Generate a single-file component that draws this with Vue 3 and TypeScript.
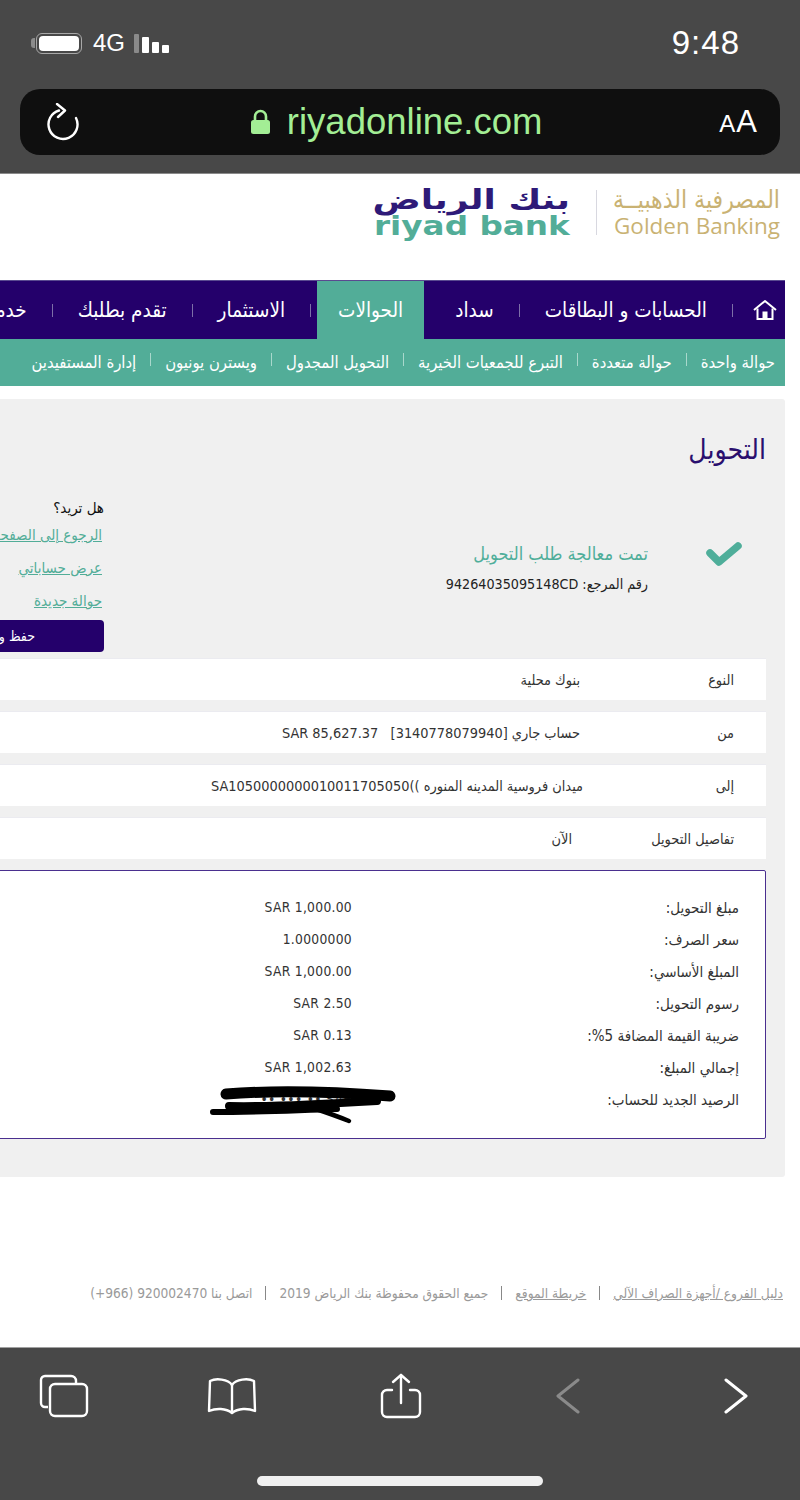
<template>
  <div class="phone">
    <header class="chrome-top">
      <div class="status">
        <div class="status-left">
          <span class="battery-tip"></span>
          <span class="battery"><span class="battery-fill"></span></span>
          <span class="net">4G</span>
          <span class="signal">
            <i v-for="b in signalBars" :key="b.h" :class="{ off: b.off }" :style="{ height: b.h + 'px' }"></i>
          </span>
        </div>
        <span class="clock">9:48</span>
      </div>
      <div class="urlbar">
        <svg class="reload" width="36" height="38" viewBox="0 0 36 38" fill="none" stroke="#fff" stroke-width="2.4" stroke-linecap="round" stroke-linejoin="round">
          <path d="M14 7.5 A14.5 14.5 0 1 0 31 15" />
          <path d="M12 1 L20 7.5 L13 14" />
        </svg>
        <div class="address">
          <svg width="21" height="26" viewBox="0 0 21 26">
            <path d="M5 12 V7.5 a5.5 5.5 0 0 1 11 0 V12" fill="none" stroke="#a3ee95" stroke-width="2.6" />
            <rect x="1" y="11" width="19" height="14" rx="2.5" fill="#a3ee95" />
          </svg>
          <span>riyadonline.com</span>
        </div>
        <div class="reader"><small>A</small><span>A</span></div>
      </div>
    </header>

    <main class="site">
      <div class="brand">
        <div class="golden">
          <span class="golden-ar">المصرفية الذهبيــة</span>
          <span class="golden-en">Golden Banking</span>
        </div>
        <i class="brand-sep"></i>
        <div class="bank">
          <span class="bank-ar">بنك الرياض</span>
          <span class="bank-en">riyad bank</span>
        </div>
      </div>

      <nav class="mainnav">
        <svg class="home" width="26" height="22" viewBox="0 0 26 22" fill="none" stroke="#fff" stroke-width="2">
          <path d="M2 11 L13 2 L24 11" stroke-linejoin="round" />
          <path d="M5.5 9.5 V20 H20.5 V9.5" />
          <rect x="10.5" y="12.5" width="5" height="7.5" fill="#fff" stroke="none" />
        </svg>
        <template v-for="item in mainItems" :key="item.label">
          <i v-if="!item.active" class="nav-sep"></i>
          <a class="nav-item" :class="{ active: item.active }">{{ item.label }}</a>
        </template>
      </nav>

      <nav class="subnav">
        <template v-for="(item, i) in subItems" :key="item">
          <i v-if="i > 0" class="sub-sep"></i>
          <a class="sub-item">{{ item }}</a>
        </template>
      </nav>

      <section class="panel">
        <h1>التحويل</h1>

        <div class="result">
          <div class="check">
            <svg width="36" height="26" viewBox="0 0 36 26">
              <path d="M4 12 L13 21 L32 5" fill="none" stroke="#4fae9a" stroke-width="7.5" stroke-linejoin="round" stroke-linecap="round" />
            </svg>
          </div>
          <div class="result-text">
            <p class="done">تمت معالجة طلب التحويل</p>
            <p class="ref">رقم المرجع: 94264035095148CD</p>
          </div>
          <div class="actions">
            <p class="want">هل تريد؟</p>
            <a v-for="link in actionLinks" :key="link" class="action-link">{{ link }}</a>
            <button class="save">حفظ و طباعة الإيصال كملف</button>
          </div>
        </div>

        <div class="rows">
          <div v-for="row in summaryRows" :key="row.label" class="row">
            <span class="row-label">{{ row.label }}</span>
            <span :style="{ marginRight: row.shift + 'px' }">{{ row.value }}</span>
          </div>
        </div>

        <div class="amounts">
          <div v-for="line in amountLines" :key="line.label" class="amount-line">
            <span class="amount-label">{{ line.label }}</span>
            <span class="amount-value">{{ line.value }}</span>
          </div>
          <svg class="scribble" width="190" height="44" viewBox="0 0 190 44" fill="none" stroke="#000" stroke-linecap="round">
            <path d="M19 9 C70 5 130 7 183 11" stroke-width="11" />
            <path d="M22 21 C70 22 120 19 170 16" stroke-width="8" />
            <path d="M6 27 C50 27 90 25 130 24" stroke-width="6" />
            <path d="M106 23 C118 27 130 31 142 36" stroke-width="4.5" />
          </svg>
        </div>
      </section>

      <footer class="foot">
        <a>دليل الفروع /أجهزة الصراف الآلي</a>
        <i></i>
        <a>خريطة الموقع</a>
        <i></i>
        <span>جميع الحقوق محفوظة بنك الرياض 2019</span>
        <i></i>
        <span>اتصل بنا 920002470 (966+)</span>
      </footer>
    </main>

    <footer class="chrome-bottom">
      <div class="toolbar">
        <svg width="50" height="44" viewBox="0 0 50 44" fill="none" stroke="#fff" stroke-width="2.4">
          <path d="M9 33 H6 a4 4 0 0 1 -4 -4 V6 a4 4 0 0 1 4 -4 H32 a5 5 0 0 1 5 5 V9" />
          <rect x="11" y="10" width="37" height="32" rx="5" />
        </svg>
        <svg class="tool-book" width="50" height="38" viewBox="0 0 50 38" fill="none" stroke="#fff" stroke-width="2.4" stroke-linejoin="round">
          <path d="M25 8 C21 2 9 1 3 4 L2 34 C9 31 19 31 25 36 C31 31 41 31 48 34 L47 4 C41 1 29 2 25 8 Z" />
          <path d="M25 8 V36" />
        </svg>
        <svg class="tool-share" width="42" height="46" viewBox="0 0 42 46" fill="none" stroke="#fff" stroke-width="2.4" stroke-linecap="round" stroke-linejoin="round">
          <path d="M12 17 H7 a5 5 0 0 0 -5 5 V39 a5 5 0 0 0 5 5 H35 a5 5 0 0 0 5 -5 V22 a5 5 0 0 0 -5 -5 H30" />
          <path d="M21 30 V2" />
          <path d="M13 9 L21 2 L29 9" />
        </svg>
        <svg class="tool-back" width="26" height="36" viewBox="0 0 26 36" fill="none" stroke="#8a8a8a" stroke-width="3" stroke-linecap="round" stroke-linejoin="round">
          <path d="M23 2 L3 18 L23 34" />
        </svg>
        <svg class="tool-next" width="26" height="36" viewBox="0 0 26 36" fill="none" stroke="#fff" stroke-width="3" stroke-linecap="round" stroke-linejoin="round">
          <path d="M3 2 L23 18 L3 34" />
        </svg>
      </div>
      <div class="home-indicator"></div>
    </footer>
  </div>
</template>

<script setup lang="ts">
interface SummaryRow {
  label: string
  value: string
  shift: number
}

const signalBars = [
  { h: 19, off: true },
  { h: 16, off: false },
  { h: 11, off: false },
  { h: 8, off: false }
]

const mainItems = [
  { label: 'الحسابات و البطاقات', active: false },
  { label: 'سداد', active: false },
  { label: 'الحوالات', active: true },
  { label: 'الاستثمار', active: false },
  { label: 'تقدم بطلبك', active: false },
  { label: 'خدمات', active: false }
]

const subItems = [
  'حوالة واحدة',
  'حوالة متعددة',
  'التبرع للجمعيات الخيرية',
  'التحويل المجدول',
  'ويسترن يونيون',
  'إدارة المستفيدين'
]

const actionLinks = ['الرجوع إلى الصفحة الرئيسية', 'عرض حساباتي', 'حوالة جديدة']

const summaryRows: SummaryRow[] = [
  { label: 'النوع', value: 'بنوك محلية', shift: 0 },
  { label: 'من', value: 'حساب جاري [3140778079940]\u00a0\u00a0\u00a0SAR 85,627.37', shift: 0 },
  { label: 'إلى', value: 'ميدان فروسية المدينه المنوره ))SA1050000000010011705050', shift: -3 },
  { label: 'تفاصيل التحويل', value: 'الآن', shift: 8 }
]

const amountLines = [
  { label: 'مبلغ التحويل:', value: 'SAR 1,000.00' },
  { label: 'سعر الصرف:', value: '1.0000000' },
  { label: 'المبلغ الأساسي:', value: 'SAR 1,000.00' },
  { label: 'رسوم التحويل:', value: 'SAR 2.50' },
  { label: 'ضريبة القيمة المضافة 5%:', value: 'SAR 0.13' },
  { label: 'إجمالي المبلغ:', value: 'SAR 1,002.63' },
  { label: 'الرصيد الجديد للحساب:', value: 'SAR ••,•••.••' }
]
</script>

<style scoped>
.phone {
  width: 800px;
  height: 1500px;
  display: flex;
  flex-direction: column;
  overflow: hidden;
  font-family: "DejaVu Sans Condensed", "DejaVu Sans", sans-serif;
  background: #fff;
}

.chrome-top {
  height: 174px;
  flex: none;
  box-sizing: border-box;
  padding-top: 28px;
  background: #484848;
  border-bottom: 1px solid #8a8a8a;
  font-family: "Liberation Sans", sans-serif;
}

.status {
  height: 30px;
  display: flex;
  justify-content: space-between;
  align-items: center;
  padding: 0 60px 0 31px;
  color: #fff;
}

.status-left {
  display: flex;
  align-items: center;
}

.battery-tip {
  width: 4px;
  height: 10px;
  background: #8c8c8c;
  border-radius: 3px 0 0 3px;
}

.battery {
  width: 46px;
  height: 21px;
  box-sizing: border-box;
  margin-left: 1px;
  padding: 2px;
  border: 1.5px solid #a8a8a8;
  border-radius: 6px;
}

.battery-fill {
  display: block;
  width: 100%;
  height: 100%;
  background: #fff;
  border-radius: 4px;
}

.net {
  margin-left: 11px;
  font-size: 24px;
}

.signal {
  display: flex;
  align-items: flex-end;
  gap: 3px;
  height: 19px;
  margin-left: 9px;
}

.signal i {
  width: 7px;
  background: #fff;
  border-radius: 1px;
}

.signal i.off {
  width: 5px;
  background: #8a8a8a;
}

.clock {
  font-size: 33px;
  letter-spacing: 1px;
}

.urlbar {
  height: 66px;
  margin: 31px 20px 0;
  padding: 0 23px 0 25px;
  display: flex;
  align-items: center;
  justify-content: space-between;
  background: #0f0f0f;
  border-radius: 20px;
}

.address {
  display: flex;
  align-items: center;
  gap: 16px;
  margin-right: 8px;
  color: #a3ee95;
  font-size: 36.5px;
}

.reader {
  color: #fff;
  font-size: 31px;
  display: flex;
  align-items: baseline;
  gap: 1px;
}

.reader small {
  font-size: 24px;
}

.site {
  flex: 1;
  min-height: 0;
  overflow: hidden;
  direction: rtl;
  background: #fff;
}

.brand {
  height: 106px;
  box-sizing: border-box;
  padding: 12px 20px 0 0;
  display: flex;
  align-items: flex-start;
}

.golden {
  width: 167px;
  display: flex;
  flex-direction: column;
  color: #c9b273;
}

.golden-ar {
  font-size: 24.5px;
  line-height: 28px;
  white-space: nowrap;
}

.golden-en {
  direction: ltr;
  text-align: right;
  font-family: "Open Sans", sans-serif;
  font-size: 22.5px;
  line-height: 24px;
  white-space: nowrap;
}

.brand-sep {
  width: 1px;
  height: 45px;
  margin: 4px 16px 0 26px;
  background: #d8d8e0;
}

.bank {
  width: 196px;
  display: flex;
  flex-direction: column;
}

.bank-ar {
  color: #2e1a78;
  font-family: "DejaVu Sans", sans-serif;
  font-size: 27px;
  font-weight: 700;
  line-height: 27px;
  white-space: nowrap;
  transform: scaleX(1.33);
  transform-origin: right center;
}

.bank-en {
  direction: ltr;
  color: #52ad98;
  font-family: "DejaVu Sans", sans-serif;
  font-size: 27px;
  font-weight: 700;
  line-height: 25px;
  white-space: nowrap;
  transform: scaleX(1.21);
  transform-origin: left center;
}

.mainnav {
  width: 1000px;
  height: 59px;
  padding-right: 7px;
  box-sizing: border-box;
  display: flex;
  align-items: center;
  background: #24006b;
  border-top: 1px solid #5a4a90;
  position: relative;
  left: -15px;
  color: #fff;
  font-size: 20.5px;
  white-space: nowrap;
}

.home {
  flex: none;
  margin-left: 19px;
}

.nav-item {
  padding: 0 25px;
}

.nav-item.active {
  align-self: stretch;
  display: flex;
  align-items: center;
  margin: 0 6px;
  padding: 0 21px;
  background: #52ad98;
}

.nav-sep {
  width: 1px;
  height: 13px;
  background: #7d6fa8;
}

.subnav {
  width: 1000px;
  height: 47px;
  box-sizing: border-box;
  padding-right: 10px;
  display: flex;
  align-items: center;
  position: relative;
  left: -15px;
  background: #52ad98;
  color: #fff;
  font-size: 16.5px;
  white-space: nowrap;
}

.sub-sep {
  width: 1px;
  height: 13px;
  margin: -6px 14px 0;
  background: #a9d8cc;
}

.panel {
  width: 1000px;
  margin-top: 13px;
  position: relative;
  left: -15px;
  box-sizing: border-box;
  height: 778px;
  padding: 35px 19px 0 0;
  background: #f0f0f0;
  border-radius: 3px;
}

h1 {
  margin: 0;
  color: #2a0f6e;
  font-size: 28px;
  font-weight: 400;
  line-height: 32px;
}

.result {
  height: 154px;
  margin-top: 29px;
  display: grid;
  grid-template-columns: 118px 544px 1fr;
}

.check {
  padding: 46px 24px 0 0;
}

.result-text {
  padding-top: 47px;
}

.result-text p {
  margin: 0;
}

.done {
  color: #4fae9a;
  font-size: 18px;
  line-height: 24px;
}

.ref {
  margin-top: 6px !important;
  color: #222;
  font-size: 14.2px;
  line-height: 24px;
}

.actions {
  display: flex;
  flex-direction: column;
  align-items: flex-start;
  white-space: nowrap;
  font-size: 15px;
}

.want {
  margin: 1px 0 -1px;
  color: #111;
  line-height: 24px;
}

.action-link {
  margin-right: 2px;
  color: #52ad98;
  line-height: 33px;
  text-decoration: underline;
}

.save {
  flex: none;
  width: 230px;
  height: 32px;
  margin-top: 2px;
  padding: 0 69px 0 0;
  border: none;
  border-radius: 4px;
  background: #24006b;
  color: #fff;
  font: inherit;
  font-size: 14px;
  text-align: right;
  white-space: nowrap;
  overflow: hidden;
}

.rows {
  display: flex;
  flex-direction: column;
  gap: 11px;
  margin-top: 9px;
}

.row {
  height: 42px;
  box-sizing: border-box;
  padding-right: 32px;
  display: flex;
  align-items: center;
  background: #fff;
  border-top: 1px solid #ebebf0;
  color: #333;
  font-size: 14.4px;
}

.row-label {
  width: 154px;
  flex: none;
}

.amounts {
  position: relative;
  height: 269px;
  margin-top: 11px;
  box-sizing: border-box;
  padding: 21px 26px 0 0;
  background: #fff;
  border: 1px solid #4a2f8f;
  border-radius: 2px;
  color: #333;
  font-size: 15px;
}

.amount-line {
  height: 32px;
  display: flex;
  align-items: center;
}

.amount-label {
  width: 387px;
  flex: none;
}

.amount-value {
  margin-top: -2px;
  font-size: 13.7px;
  letter-spacing: .3px;
}

.scribble {
  position: absolute;
  top: 214px;
  right: 368px;
}

.foot {
  margin-top: 101px;
  height: 30px;
  padding-right: 17px;
  display: flex;
  align-items: center;
  color: #9a9a9a;
  font-size: 13.6px;
  white-space: nowrap;
}

.foot a {
  text-decoration: underline;
}

.foot i {
  width: 1px;
  height: 14px;
  margin: 0 13px;
  background: #888;
}

.chrome-bottom {
  height: 153px;
  flex: none;
  box-sizing: border-box;
  background: #484848;
  border-top: 1px solid #a0a0a0;
  display: flex;
  flex-direction: column;
  align-items: center;
}

.toolbar {
  width: 800px;
  height: 96px;
  flex: none;
  box-sizing: border-box;
  padding-left: 39px;
  display: flex;
  align-items: center;
}

.tool-book {
  margin-left: 118px;
}

.tool-share {
  margin-left: 123px;
}

.tool-back {
  margin-left: 133px;
}

.tool-next {
  margin-left: 142px;
}

.home-indicator {
  width: 286px;
  height: 10px;
  margin-top: 32px;
  background: #f0f0f0;
  border-radius: 5px;
}
</style>

<style>
html, body {
  margin: 0;
  background: #fff;
}
</style>
